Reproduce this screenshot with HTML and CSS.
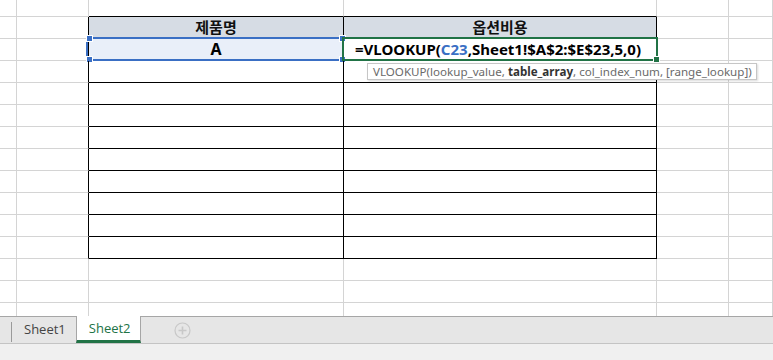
FILE: index.html
```html
<!DOCTYPE html>
<html>
  <head>
    <title>Sheet2</title>
    <link rel="stylesheet" href="styles.css">
  </head>
  <body>
    <!-- worksheet grid -->
    <div class="sheet">
      <div class="row top">
        <div class="c"></div><div class="c"></div><div class="c t-top"></div><div class="c t-top t-end"></div><div class="c"></div><div class="c"></div>
      </div>
      <div class="row">
        <div class="c"></div><div class="c t-left"></div><div class="c head">제품명</div><div class="c head">옵션비용</div><div class="c"></div><div class="c"></div>
      </div>
      <div class="row">
        <div class="c"></div><div class="c t-left"></div>
        <div class="c tb picked">A<span class="ref"><i class="h tl"></i><i class="h bl"></i><i class="h tr"></i><i class="h br"></i></span></div>
        <div class="c tb formula">
          <span class="f">=VLOOKUP(<span class="blue">C23</span>,Sheet1!$A$2:$E$23,5,0)</span>
          <span class="active"><i class="fill"></i></span>
          <span class="tip">VLOOKUP(lookup_value, <b>table_array</b>, col_index_num, [range_lookup])</span>
        </div>
        <div class="c"></div><div class="c"></div>
      </div>
      <div class="row"><div class="c"></div><div class="c t-left"></div><div class="c tb"></div><div class="c tb"></div><div class="c"></div><div class="c"></div></div>
      <div class="row"><div class="c"></div><div class="c t-left"></div><div class="c tb"></div><div class="c tb"></div><div class="c"></div><div class="c"></div></div>
      <div class="row"><div class="c"></div><div class="c t-left"></div><div class="c tb"></div><div class="c tb"></div><div class="c"></div><div class="c"></div></div>
      <div class="row"><div class="c"></div><div class="c t-left"></div><div class="c tb"></div><div class="c tb"></div><div class="c"></div><div class="c"></div></div>
      <div class="row"><div class="c"></div><div class="c t-left"></div><div class="c tb"></div><div class="c tb"></div><div class="c"></div><div class="c"></div></div>
      <div class="row"><div class="c"></div><div class="c t-left"></div><div class="c tb"></div><div class="c tb"></div><div class="c"></div><div class="c"></div></div>
      <div class="row"><div class="c"></div><div class="c t-left"></div><div class="c tb"></div><div class="c tb"></div><div class="c"></div><div class="c"></div></div>
      <div class="row"><div class="c"></div><div class="c t-left"></div><div class="c tb"></div><div class="c tb"></div><div class="c"></div><div class="c"></div></div>
      <div class="row"><div class="c"></div><div class="c t-left"></div><div class="c tb"></div><div class="c tb"></div><div class="c"></div><div class="c"></div></div>
      <div class="row"><div class="c"></div><div class="c"></div><div class="c"></div><div class="c"></div><div class="c"></div><div class="c"></div></div>
      <div class="row"><div class="c"></div><div class="c"></div><div class="c"></div><div class="c"></div><div class="c"></div><div class="c"></div></div>
      <div class="row last"><div class="c"></div><div class="c"></div><div class="c"></div><div class="c"></div><div class="c"></div><div class="c"></div></div>
    </div>

    <!-- sheet tabs -->
    <div class="tabs">
      <span class="sep"></span>
      <span class="tab">Sheet1</span>
      <span class="tab on">Sheet2</span>
      <span class="add">
        <svg width="17" height="17" viewBox="0 0 17 17">
          <circle cx="8.5" cy="8.5" r="7.5" fill="none" stroke="#c8c8c8" stroke-width="1.2"/>
          <path d="M8.5 4.5v8M4.5 8.5h8" stroke="#c8c8c8" stroke-width="1.6"/>
        </svg>
      </span>
    </div>
    <div class="status"></div>
  </body>
</html>
```
FILE: styles.css
```css
body {
  margin: 0;
  width: 773px;
  height: 360px;
  overflow: hidden;
  background: #fff;
  font-family: "Noto Sans", "Noto Sans CJK KR", sans-serif;
}

.sheet {
  height: 316px;
  overflow: hidden;
}
.row {
  display: grid;
  grid-template-columns: 17px 72px 255px 313px 72px 1fr;
  height: 22px;
}
.row.top {
  height: 17px;
}
.row.last {
  height: 13px;
}
.c {
  box-sizing: border-box;
  border-right: 1px solid #d4d4d4;
  border-bottom: 1px solid #d4d4d4;
  position: relative;
}
.row.last .c {
  border-bottom: none;
}

/* table borders */
.t-top {
  border-bottom-color: #000;
}
.t-left {
  border-right-color: #000;
}
.tb {
  border-right-color: #000;
  border-bottom-color: #000;
}
.head {
  border-right-color: #000;
  border-bottom-color: #000;
  background: #d6dce4;
  text-align: center;
  font-weight: bold;
  font-size: 15px;
  line-height: 21px;
  color: #111;
}

.picked {
  background: #e9eff9;
  text-align: center;
  font-weight: bold;
  font-size: 16px;
  line-height: 21px;
}
.ref {
  position: absolute;
  left: -3px;
  top: -2px;
  right: -1px;
  bottom: -1px;
  border: 2px solid #3a6fc4;
}
.h {
  position: absolute;
  width: 5px;
  height: 5px;
  background: #3a6fc4;
  border: 1px solid #fff;
}
.h.tl { left: -2px; top: -4px; }
.h.bl { left: -2px; bottom: -4px; }
.h.tr { right: -4px; top: -4px; }
.h.br { right: -4px; bottom: -4px; }

.formula {
  z-index: 2;
}
.f {
  display: block;
  padding-left: 11px;
  font-weight: bold;
  font-size: 15px;
  line-height: 21px;
  color: #000;
  white-space: nowrap;
}
.blue {
  color: #3a6fc4;
}
.active {
  position: absolute;
  left: -2px;
  top: -2px;
  right: -2px;
  bottom: -1px;
  border: 2px solid #217346;
}
.fill {
  position: absolute;
  right: -4px;
  bottom: -4px;
  width: 5px;
  height: 5px;
  background: #217346;
  border: 1px solid #fff;
}
.tip {
  position: absolute;
  left: 23px;
  top: 24px;
  width: 390px;
  height: 17px;
  box-sizing: border-box;
  border: 1px solid #c6c6c6;
  background: #fff;
  box-shadow: 1px 1px 2px rgba(0, 0, 0, 0.15);
  font-size: 11.6px;
  line-height: 15px;
  padding-left: 5px;
  color: #6a6a6a;
  white-space: nowrap;
}
.tip b {
  color: #333;
}

/* tab strip */
.tabs {
  display: flex;
  align-items: flex-start;
  height: 28px;
  box-sizing: border-box;
  background: #e6e6e6;
  border-top: 1px solid #a6a6a6;
  border-bottom: 1px solid #c4c4c4;
  font-family: "Open Sans", "Noto Sans", sans-serif;
  font-size: 13px;
}
.sep {
  width: 1px;
  height: 20px;
  margin: 5px 0 0 11px;
  background: #9a9a9a;
}
.tab {
  padding: 0 10px 0 12px;
  line-height: 24px;
  color: #444;
}
.tab.on {
  background: #fff;
  color: #217346;
  width: 65px;
  box-sizing: border-box;
  margin-top: -1px;
  padding: 0 0 0 12px;
  border-left: 1px solid #a6a6a6;
  border-right: 1px solid #a6a6a6;
  border-bottom: 3px solid #217346;
  height: 27px;
  line-height: 25px;
}
.add {
  margin: 5px 0 0 33px;
  line-height: 0;
}
.status {
  height: 16px;
  background: #f0f0f0;
}
```
